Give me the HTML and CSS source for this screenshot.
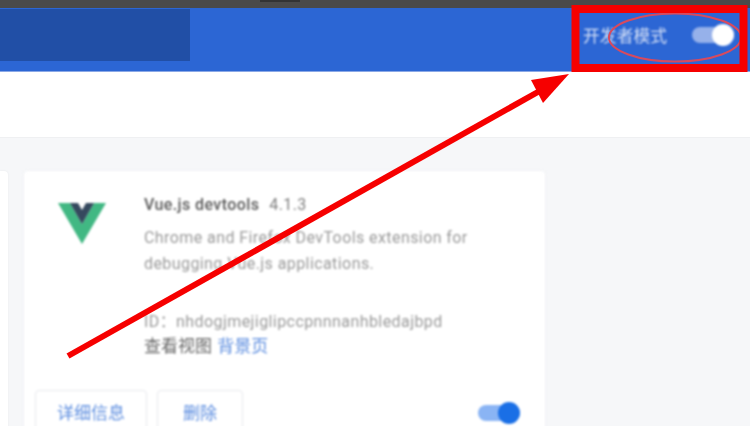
FILE: index.html
```html
<!DOCTYPE html>
<html lang="zh-CN">
<head>
<meta charset="utf-8">
<title>扩展程序</title>
<link rel="stylesheet" href="styles.css">
</head>
<body>
<div class="topbar"><div class="topbar-notch"></div></div>
<header class="header">
  <div class="search"></div>
  <div class="devmode">
    <span class="devmode-label">开发者模式</span>
    <span class="toggle toggle-light"><span class="knob"></span></span>
  </div>
</header>
<div class="subbar"></div>
<main class="content">
  <div class="card-stub"></div>
  <section class="card">
    <div class="card-top">
      <div class="logo">
        <svg width="48" height="42" viewBox="0 0 48 42">
          <polygon points="0,1 12,1 24,22 36,1 48,1 24,42" fill="#41b883"/>
          <polygon points="12,1 20,1 24,8 28,1 36,1 24,22" fill="#35495e"/>
        </svg>
      </div>
      <div class="info">
        <div class="title"><span class="name">Vue.js devtools</span><span class="version">4.1.3</span></div>
        <p class="desc">Chrome and Firefox DevTools extension for debugging Vue.js applications.</p>
        <p class="ext-id">ID：nhdogjmejiglipccpnnnanhbledajbpd</p>
        <p class="views">查看视图 <a class="link">背景页</a></p>
      </div>
    </div>
    <div class="card-actions">
      <button class="btn btn-details">详细信息</button>
      <button class="btn btn-remove">删除</button>
      <span class="toggle toggle-blue"><span class="knob"></span></span>
    </div>
  </section>
</main>
<svg class="annotation" width="750" height="426" viewBox="0 0 750 426">
  <line x1="68" y1="356" x2="545" y2="88" stroke="#f60000" stroke-width="6"/>
  <polygon points="569,74 531,80 543,103" fill="#f60000"/>
  <ellipse cx="675" cy="37.500" rx="66" ry="24" fill="none" stroke="#d84a5e" stroke-width="2"/>
  <rect x="575.500" y="9" width="168" height="59" fill="none" stroke="#f60000" stroke-width="8"/>
</svg>
</body>
</html>
```
FILE: styles.css
```css
* { box-sizing: border-box; }
html, body { margin: 0; height: 100%; }
body {
  width: 750px;
  height: 426px;
  overflow: hidden;
  background: #f6f7f9;
  font-family: Roboto, "Noto Sans CJK SC", sans-serif;
  position: relative;
}
.topbar {
  height: 8px;
  background: #4a4a4a;
  display: flex;
  padding-left: 260px;
}
.topbar-notch { width: 40px; height: 2px; background: #333; }
.header {
  height: 64px;
  background: #2c66d4;
  border-bottom: 1px solid #8aa8e6;
  display: flex;
  justify-content: space-between;
  align-items: flex-start;
  padding-top: 1px;
}
.search {
  width: 190px;
  height: 52px;
  background: #214fa6;
  filter: blur(0.5px);
}
.devmode {
  display: flex;
  align-items: center;
  height: 52px;
  padding-right: 16px;
  filter: blur(0.9px);
}
.devmode-label {
  color: #d5e0f6;
  font-size: 16.800px;
  margin-right: 25px;
}
.toggle {
  display: block;
  width: 42px;
  height: 16px;
  border-radius: 8px;
  position: relative;
}
.knob {
  position: absolute;
  right: 0;
  top: -3px;
  width: 22px;
  height: 22px;
  border-radius: 50%;
}
.toggle-light { background: #96b1ea; }
.toggle-light .knob { background: #fff; }
.toggle-blue { background: #8ab4f4; }
.toggle-blue .knob { background: #1a6fe6; }
.subbar {
  height: 66px;
  background: #fff;
  border-bottom: 1px solid #eff0f2;
}
.content {
  display: flex;
  gap: 16px;
  padding: 33px 0 0;
  height: 288px;
  overflow: hidden;
}
.card-stub {
  width: 8px;
  height: 260px;
  background: #fff;
  border-radius: 0 4px 4px 0;
  box-shadow: 0 0 2px #e6e7ea;
}
.card {
  width: 521px;
  height: 290px;
  flex: none;
  background: #fff;
  border-radius: 4px;
  box-shadow: 0 0 2px #e6e7ea;
  display: flex;
  flex-direction: column;
  filter: blur(0.8px);
}
.card-top {
  display: flex;
  padding: 22px 0 0 34px;
  height: 219px;
}
.logo { width: 86px; padding-top: 9px; }
.logo svg { display: block; }
.info { flex: 1; padding-right: 40px; }
.title { font-size: 16px; line-height: 24px; color: #555; letter-spacing: 0.4px; }
.name { font-weight: 500; color: #5a5a5a; }
.version { margin-left: 10px; color: #808080; }
.desc {
  margin: 8px 0 0;
  font-size: 16px;
  line-height: 26px;
  color: #9a9a9a;
  letter-spacing: 0.42px;
}
.ext-id {
  margin: 32px 0 0;
  font-size: 16px;
  line-height: 25px;
  color: #9a9a9a;
  letter-spacing: 0.42px;
}
.views {
  margin: 0;
  font-size: 17px;
  line-height: 25px;
  color: #666;
}
.link { color: #5f8fe0; margin-left: 1px; }
.card-actions {
  display: flex;
  align-items: center;
  padding: 0 25px 0 11px;
}
.btn {
  height: 46px;
  background: #fff;
  border: 1px solid #e8e9ec;
  border-radius: 4px;
  color: #5f8fe0;
  font: 17px Roboto, "Noto Sans CJK SC", sans-serif;
  padding: 0 0 4px;
}
.btn-details { width: 112px; margin-right: 10px; }
.btn-remove { width: 86px; }
.toggle-blue { margin-left: auto; width: 42px; }
.annotation { position: absolute; left: 0; top: 0; }
```
